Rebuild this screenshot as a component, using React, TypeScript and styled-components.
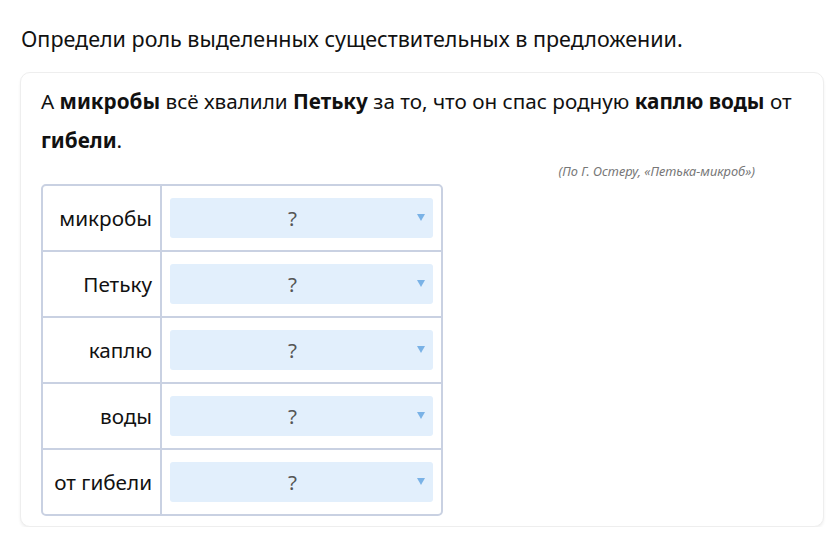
import React from 'react';
import styled, { createGlobalStyle } from 'styled-components';

const GlobalStyle = createGlobalStyle`
  html, body {
    margin: 0;
    padding: 0;
    background: #ffffff;
  }
  body {
    font-family: 'Noto Sans', 'Open Sans', Arial, sans-serif;
    color: #1a1a1a;
  }
`;

const Page = styled.div`
  padding: 24px 5px 0 20px;
  width: 829px;
  box-sizing: border-box;
`;

const Title = styled.h1`
  margin: 0 0 0 1px;
  font-size: 21.5px;
  font-weight: 400;
  line-height: 30px;
  color: #111;
`;

const Card = styled.div`
  margin-top: 18px;
  border: 1px solid #eeeeee;
  border-radius: 10px;
  box-shadow: 0 2px 3px rgba(0, 0, 0, 0.06);
  padding: 9px 20px 10px 20px;
  background: #fff;
`;

const Sentence = styled.p`
  margin: 0;
  font-size: 20.7px;
  line-height: 39px;
  color: #111;

  b {
    font-weight: 700;
  }
`;

const Citation = styled.div`
  text-align: right;
  padding-right: 48px;
  margin-top: 3px;
  font-size: 12.8px;
  font-style: italic;
  color: #777;
  line-height: 16px;
`;

const Table = styled.div`
  margin-top: 5px;
  width: 402px;
  display: grid;
  grid-template-columns: 119px 1fr;
  border: 2px solid #c9d1e2;
  border-radius: 5px;
  box-sizing: border-box;
`;

const LabelCell = styled.div<{ $last?: boolean }>`
  height: 64px;
  display: flex;
  align-items: center;
  justify-content: flex-end;
  padding-right: 8px;
  font-size: 20.7px;
  color: #111;
  border-right: 2px solid #c9d1e2;
  border-bottom: ${p => (p.$last ? 'none' : '2px solid #c9d1e2')};
`;

const SelectCell = styled.div<{ $last?: boolean }>`
  height: 64px;
  display: flex;
  align-items: center;
  padding: 0 8px;
  border-bottom: ${p => (p.$last ? 'none' : '2px solid #c9d1e2')};
`;

const SelectBox = styled.div`
  position: relative;
  flex: 1;
  height: 40px;
  padding-right: 18px;
  border-radius: 3px;
  background: #e2effc;
  display: flex;
  align-items: center;
  justify-content: center;
  font-size: 20.7px;
  color: #555;
`;

const Arrow = styled.span`
  position: absolute;
  right: 8px;
  top: 16px;
  width: 0;
  height: 0;
  border-left: 4px solid transparent;
  border-right: 4px solid transparent;
  border-top: 7px solid #7ab2e6;
`;

const words = ['микробы', 'Петьку', 'каплю', 'воды', 'от гибели'];

export default function App() {
  return (
    <>
      <GlobalStyle />
      <Page>
        <Title>Определи роль выделенных существительных в предложении.</Title>
        <Card>
          <Sentence>
            А <b>микробы</b> всё хвалили <b>Петьку</b> за то, что он спас родную <b>каплю воды</b> от{' '}
            <b>гибели</b>.
          </Sentence>
          <Citation>(По Г. Остеру, «Петька-микроб»)</Citation>
          <Table>
            {words.map((w, i) => {
              const last = i === words.length - 1;
              return (
                <React.Fragment key={w}>
                  <LabelCell $last={last}>{w}</LabelCell>
                  <SelectCell $last={last}>
                    <SelectBox>
                      ?
                      <Arrow />
                    </SelectBox>
                  </SelectCell>
                </React.Fragment>
              );
            })}
          </Table>
        </Card>
      </Page>
    </>
  );
}
